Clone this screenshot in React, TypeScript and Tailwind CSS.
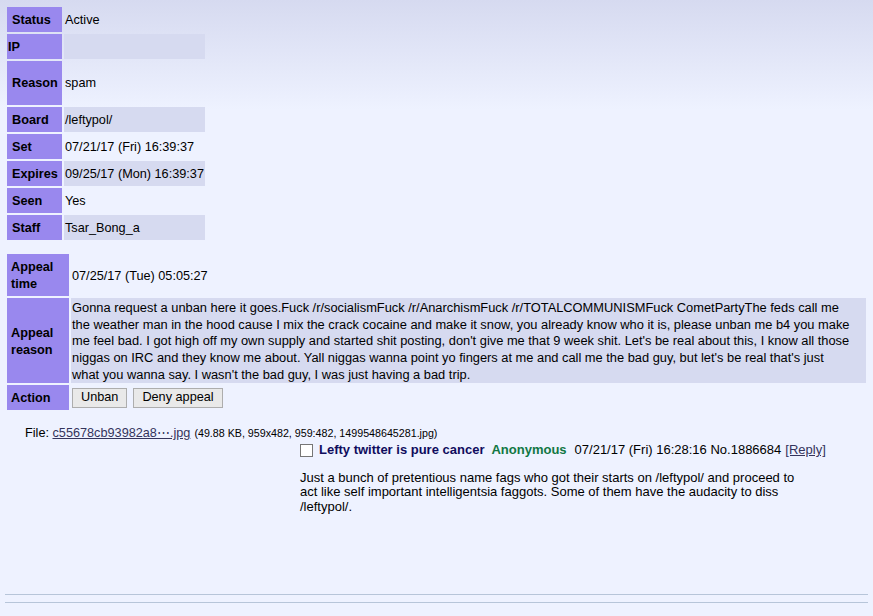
import React from "react";

const font = { fontFamily: '"Liberation Sans", Arial, sans-serif' };

type Row = { label: string; value: string; h: string; shaded: boolean; labelPad?: string };

const banRows: Row[] = [
  { label: "Status", value: "Active", h: "h-[25px]", shaded: false },
  { label: "IP", value: "", h: "h-[25px]", shaded: true, labelPad: "pl-[1px]" },
  { label: "Reason", value: "spam", h: "h-[44px]", shaded: false },
  { label: "Board", value: "/leftypol/", h: "h-[25px]", shaded: true },
  { label: "Set", value: "07/21/17 (Fri) 16:39:37", h: "h-[25px]", shaded: false },
  { label: "Expires", value: "09/25/17 (Mon) 16:39:37", h: "h-[25px]", shaded: true },
  { label: "Seen", value: "Yes", h: "h-[25px]", shaded: false },
  { label: "Staff", value: "Tsar_Bong_a", h: "h-[25px]", shaded: true },
];

const BanTable = () => (
  <div className="grid w-max grid-cols-[55px_141px] gap-[2px]">
    {banRows.map((r) => (
      <React.Fragment key={r.label}>
        <div className={`${r.h} flex items-center bg-[#9988ee] pt-[2px] font-bold ${r.labelPad ?? "pl-[5px]"}`}>
          {r.label}
        </div>
        <div className={`${r.h} flex items-center pl-[1px] pt-[2px] ${r.shaded ? "bg-[#d6daf0]" : ""}`}>
          {r.value}
        </div>
      </React.Fragment>
    ))}
  </div>
);

const AppealTable = () => (
  <div className="grid w-max grid-cols-[62px_795px] gap-[2px] leading-[16.67px]">
    <div className="flex h-[42px] items-center bg-[#9988ee] pl-[4px] pt-[2px] font-bold">
      Appeal
      <br />
      time
    </div>
    <div className="flex h-[42px] items-center pl-[1px] pt-[2px]">07/25/17 (Tue) 05:05:27</div>

    <div className="flex h-[85px] items-center bg-[#9988ee] pl-[4px] pt-[2px] font-bold">
      Appeal
      <br />
      reason
    </div>
    <div className="h-[85px] whitespace-nowrap bg-[#d6daf0] pl-[1px] pt-[2px] text-[12.85px]">
      Gonna request a unban here it goes.Fuck /r/socialismFuck /r/AnarchismFuck /r/TOTALCOMMUNISMFuck CometPartyThe feds call me
      <br />
      the weather man in the hood cause I mix the crack cocaine and make it snow, you already know who it is, please unban me b4 you make
      <br />
      me feel bad. I got high off my own supply and started shit posting, don't give me that 9 week shit. Let's be real about this, I know all those
      <br />
      niggas on IRC and they know me about. Yall niggas wanna point yo fingers at me and call me the bad guy, but let's be real that's just
      <br />
      what you wanna say. I wasn't the bad guy, I was just having a bad trip.
    </div>

    <div className="flex h-[25px] items-center bg-[#9988ee] pl-[4px] pt-[2px] font-bold">Action</div>
    <div className="flex h-[25px] items-center gap-[6px] pl-[1px]">
      <button className="h-[20px] border border-[#adadad] bg-[#e9e9e9] px-[8px]">Unban</button>
      <button className="h-[20px] border border-[#adadad] bg-[#e9e9e9] px-[8px]">Deny appeal</button>
    </div>
  </div>
);

const Post = () => (
  <div>
    <div className="flex h-[17px] items-center pl-[25px]">
      <span>File:&nbsp;</span>
      <span className="text-[#34345c] underline">c55678cb93982a8⋯.jpg</span>
      <span className="ml-[4px] text-[10.7px]">(49.88 KB, 959x482, 959:482, 1499548645281.jpg)</span>
    </div>
    <div className="pl-[300px]">
      <div className="flex h-[16px] items-center whitespace-nowrap text-[13px]">
        <span className="mr-[6px] h-[13px] w-[13px] border border-[#767676] bg-white" />
        <span className="font-bold text-[#0f0c5d]">Lefty twitter is pure cancer</span>
        <span className="ml-[7px] font-bold text-[#117743]">Anonymous</span>
        <span className="ml-[8px]">07/21/17 (Fri) 16:28:16 No.1886684</span>
        <span className="ml-[4px] text-[#34345c] underline">[Reply]</span>
      </div>
      <p className="mt-[13px] w-[530px] whitespace-nowrap text-[13px] leading-[14.4px]">
        Just a bunch of pretentious name fags who got their starts on /leftypol/ and proceed to
        <br />
        act like self important intelligentsia faggots. Some of them have the audacity to diss
        <br />
        /leftypol/.
      </p>
    </div>
  </div>
);

export default function App() {
  return (
    <div
      className="min-h-screen bg-[#eef2ff] bg-[linear-gradient(to_bottom,#d6daf0,#eef2ff_110px)] text-[12.7px] text-black"
      style={font}
    >
      <div className="pl-[7px] pt-[7px]">
        <BanTable />
      </div>
      <div className="mt-[14px] pl-[7px]">
        <AppealTable />
      </div>
      <div className="mt-[15px]">
        <Post />
      </div>
      <div className="mt-[80px] px-[5px]">
        <div className="h-0 border-t border-[#b7c5d9]" />
        <div className="mt-[7px] h-0 border-t border-[#b7c5d9]" />
      </div>
    </div>
  );
}
